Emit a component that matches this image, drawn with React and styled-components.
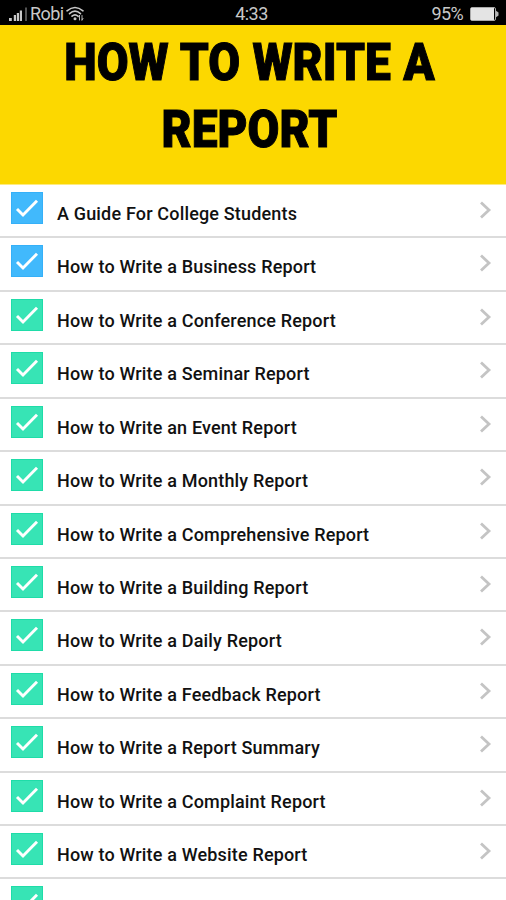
import React from 'react';
import styled, { createGlobalStyle } from 'styled-components';

const GlobalStyle = createGlobalStyle`
    * {
        box-sizing: border-box;
    }
    body {
        margin: 0;
        background: #fff;
        font-family: Roboto, "Liberation Sans", sans-serif;
        overflow: hidden;
    }
`

const Screen = styled.div`
    width: 506px;
    height: 900px;
    overflow: hidden;
    background: #fff;
`

const StatusBar = styled.div`
    display: grid;
    grid-template-columns: 1fr auto 1fr;
    align-items: center;
    height: 25px;
    padding: 2px 7px 0 9px;
    background: #000;
    color: #c8c8c8;
    font-size: 18px;
    letter-spacing: -0.6px;
    line-height: 23px;
    svg {
        display: block;
    }
`

const StatusGroup = styled.div`
    display: flex;
    align-items: center;
    justify-content: ${props => props.$end ? 'flex-end' : 'flex-start'};
    gap: ${props => props.$end ? '7px' : '3px'};
`

const Clock = styled.span`
    margin-right: 5px;
`

const Banner = styled.header`
    height: 160px;
    padding-top: 4px;
    background: #fcd800;
    border-bottom: 1px solid #fdeb80;
`

const Title = styled.h1`
    margin: 0;
    width: 499px;
    color: #000;
    font-size: 51px;
    font-weight: 900;
    line-height: 67px;
    text-align: center;
    white-space: nowrap;
    word-spacing: 1px;
    -webkit-text-stroke: 1px #000;
    transform: scaleX(0.905);
`

const List = styled.ul`
    margin: 0;
    padding: 0;
    list-style: none;
`

const Row = styled.li`
    display: flex;
    align-items: flex-start;
    height: 53.43px;
    padding: 7px 13px 0 11px;
    border-bottom: 2px solid #dcdcdc;
`

const CheckBox = styled.div`
    flex: none;
    width: 32px;
    height: 32px;
    background: ${props => props.$blue ? '#41b9fc' : '#37e4b5'};
    border: 1px solid ${props => props.$blue ? '#35b0f8' : '#1fdca8'};
    svg {
        display: block;
    }
`

const Label = styled.span`
    flex: 1;
    margin: 11px 0 0 14px;
    color: #111;
    font-size: 18px;
    font-weight: 500;
    letter-spacing: 0.17px;
    line-height: 22px;
    white-space: nowrap;
`

const Arrow = styled.svg`
    flex: none;
    display: block;
    margin-top: 8px;
`

const reports = [
    { title: 'A Guide For College Students', blue: true },
    { title: 'How to Write a Business Report', blue: true },
    { title: 'How to Write a Conference Report' },
    { title: 'How to Write a Seminar Report' },
    { title: 'How to Write an Event Report' },
    { title: 'How to Write a Monthly Report' },
    { title: 'How to Write a Comprehensive Report' },
    { title: 'How to Write a Building Report' },
    { title: 'How to Write a Daily Report' },
    { title: 'How to Write a Feedback Report' },
    { title: 'How to Write a Report Summary' },
    { title: 'How to Write a Complaint Report' },
    { title: 'How to Write a Website Report' },
    { title: '' },
];

const SignalIcon = () => (
    <svg width="18" height="16" viewBox="0 0 18 16" fill="#c8c8c8">
        <rect x="0" y="12" width="2.8" height="3" />
        <rect x="4.8" y="9" width="2.2" height="6" />
        <rect x="7.8" y="7" width="2.2" height="8" />
        <rect x="10.8" y="4.5" width="2.2" height="10.5" />
        <rect x="16.4" y="1.5" width="1.2" height="13.5" fill="#888" />
    </svg>
);

const WifiIcon = () => (
    <svg width="18" height="16" viewBox="0 0 18 16" fill="none" stroke="#c8c8c8" strokeWidth="1.6" strokeLinecap="round">
        <path d="M1 4.8Q9-1.8 17 4.8" />
        <path d="M3.5 7.6Q9 2.8 14.5 7.6" />
        <path d="M6 10.2Q9 7.5 12 10.2" />
        <circle cx="9" cy="12.8" r="1.5" fill="#c8c8c8" stroke="none" />
        <path d="M13.5 9.5V14M16 9.5V14M12.5 11L13.5 9.5M17 12.4L16 14" strokeWidth="0.9" />
    </svg>
);

const BatteryIcon = () => (
    <svg width="29" height="14" viewBox="0 0 29 14">
        <rect x="0.5" y="0.5" width="25" height="13" rx="1.5" fill="none" stroke="#aaa" />
        <rect x="1" y="1" width="23" height="12" fill="#e4e4e4" />
        <path d="M26 3.8L28.5 5.5V8.5L26 10.2Z" fill="#b5b5b5" />
    </svg>
);

const CheckIcon = () => (
    <svg width="30" height="30" viewBox="0 0 30 30" fill="none" stroke="#fff" strokeWidth="2.9">
        <path d="M5 16L11 22L25 7.8" />
    </svg>
);

const App = () => {
    return (
        <Screen>
            <GlobalStyle />
            <StatusBar>
                <StatusGroup>
                    <SignalIcon />
                    <span>Robi</span>
                    <WifiIcon />
                </StatusGroup>
                <Clock>4:33</Clock>
                <StatusGroup $end>
                    <span>95%</span>
                    <BatteryIcon />
                </StatusGroup>
            </StatusBar>
            <Banner>
                <Title>HOW TO WRITE A<br />REPORT</Title>
            </Banner>
            <List>
                {reports.map((report, i) => (
                    <Row key={i}>
                        <CheckBox $blue={report.blue}><CheckIcon /></CheckBox>
                        <Label>{report.title}</Label>
                        <Arrow width="14" height="20" viewBox="0 0 14 20" fill="none" stroke="#c4c4c4" strokeWidth="2.8">
                            {report.title && <path d="M2 2.5L10 10L2 17.5" />}
                        </Arrow>
                    </Row>
                ))}
            </List>
        </Screen>
    );
};

export default App;
